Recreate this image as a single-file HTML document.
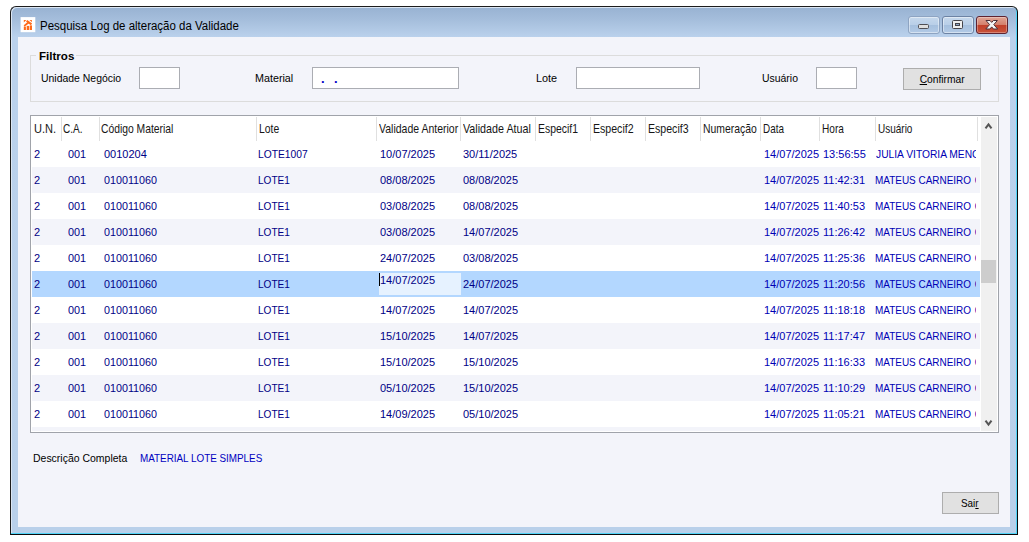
<!DOCTYPE html>
<html lang="pt-BR">
<head>
<meta charset="utf-8">
<title>Pesquisa Log de alteração da Validade</title>
<style>
*{box-sizing:border-box;margin:0;padding:0}
html,body{width:1029px;height:542px;background:#fff;overflow:hidden}
body{font-family:"Liberation Sans",sans-serif;font-size:11px;color:#000;position:relative}
.win{position:absolute;left:10px;top:6px;width:1008px;height:529px;border-radius:6px 6px 0 0;
 background:linear-gradient(#98b2d2 0px,#a4bddb 12px,#bad1ec 30px,#b9d0ea 100%);
 border:1px solid #1c1c1c;border-right-color:#0a0a0a;border-bottom-color:#0a0a0a;
 box-shadow:inset -1px -1px 0 #50d4f7, inset 1px 1px 0 #dbe6f3}
.client{position:absolute;left:18px;top:37px;width:992px;height:490px;background:#f3f4fa}
.ticon{position:absolute;left:20px;top:17px;width:16px;height:16px}
.title{position:absolute;left:40px;top:19px;font-size:12px;line-height:14px;white-space:nowrap;color:#000;transform-origin:0 50%;transform:scaleX(0.956);}
.cap{position:absolute;top:16px;height:18px;width:32px;border:1px solid #6d83a4;border-radius:3px;
 background:linear-gradient(#c6d8ec 0,#b9cfe8 48%,#a6c0de 52%,#b2cae6 100%);box-shadow:inset 0 0 0 1px rgba(255,255,255,.45)}
.cap.min{border-color:#8ea4c2}
.cap.close{background:linear-gradient(#e0a596 0,#d4806c 48%,#c1402a 52%,#c8523a 100%);border-color:#5e2230;box-shadow:inset 0 0 0 1px rgba(255,255,255,.3)}
.grp{position:absolute;left:30px;top:55px;width:969px;height:47px;border:1px solid #dcdcdc}
.grp-l{position:absolute;left:36px;top:50px;padding:0 3px;background:#f3f4fa;font-weight:bold;font-size:11px;line-height:13px}
.lbl{position:absolute;top:72px;line-height:13px;white-space:nowrap;transform-origin:0 50%}
.inp{position:absolute;top:67px;height:22px;background:#fff;border:1px solid #abadb3}
.bt{display:inline-block}
.dots{position:absolute;left:8px;top:4px;line-height:13px;font-size:13px;font-weight:bold;color:#0000c8}
.btn{position:absolute;background:#e1e1e1;border:1px solid #adadad;text-align:center;white-space:nowrap}
.grid{position:absolute;left:30px;top:115px;width:969px;height:318px;border:1px solid #a0a3aa;background:#fff}
.gin{position:absolute;left:1px;top:1px;width:948px;height:314px;overflow:hidden}
.h{position:absolute;top:5px;font-size:12.4px;line-height:14px;white-space:nowrap;color:#161616;transform-origin:0 50%}
.sep{position:absolute;top:0;width:1px;height:24px;background:#e0e0e0}
.row{position:absolute;left:0;width:948px;height:26px;background:#fff;color:#000086}
.row.alt{background:#f3f4fa}
.row.sel{background:#b3d7ff}
.c{position:absolute;top:7px;line-height:13px;white-space:nowrap;transform-origin:0 50%}
.uclip{position:absolute;left:843px;top:0;width:101px;height:26px;overflow:hidden}
.uclip .c{left:0}
.c b{font-weight:normal;margin-left:1px}
.c-ca{transform:scaleX(0.988);}
.c-cod{transform:scaleX(0.976);}
.c-cod1{}
.c-lote{transform:scaleX(0.915);}
.c-lote1{transform:scaleX(0.933);}
.c-usr{transform:scaleX(0.905);}
.c-usr1{transform:scaleX(0.94);}
.c-data,.c-hora,.c-usr,.c-usr1{color:#0000b4}
.uclip .c-usr1{left:1px;transform:scaleX(0.932)}
.edit{position:absolute;left:347px;top:2px;width:82px;height:22px;background:#e6f2ff}
.caret{position:absolute;left:0;top:0;width:1px;height:13px;background:#000}
.et{position:absolute;left:1px;top:1px;line-height:13px}
.sb{position:absolute;left:950px;top:1px;width:16px;height:314px;background:#f0f0f0}
.thumb{position:absolute;left:0;top:143px;width:15px;height:23px;background:#cdcdcd}
.sb svg{position:absolute;left:0}
.desc{position:absolute;top:452px;line-height:13px;white-space:nowrap;transform-origin:0 50%}
</style>
</head>
<body>
<div class="win"></div>
<svg class="ticon" viewBox="0 0 16 16" width="16" height="16"><rect x="0.6" y="0.1" width="14.7" height="15.1" fill="#fff"/><g fill="#ff6a1a" transform="translate(0.9,0)"><path d="M2.9 2.9h2.6L2.9 5.5z"/><path d="M6.4 2.9l4.8 3.7-1.3 1.7-4.8-3.7z"/><path d="M8.6 2.9H11v2.4z"/><path d="M7.2 4.6l1.4 1.4-5 3.8-.8-1.6z"/><rect x="2.9" y="9.6" width="2.1" height="3.4"/><rect x="5.8" y="8.9" width="2.5" height="4.1"/><rect x="8.9" y="8.4" width="2.2" height="4.6"/></g></svg>
<div class="title">Pesquisa Log de alteração da Validade</div>
<div class="cap min" style="left:908px"><svg viewBox="0 0 31 17" width="31" height="17" style="position:absolute;left:-1px;top:-1px;overflow:visible"><rect x="10.5" y="8.5" width="10" height="4" rx="1" fill="#dedede" stroke="#4f4f55"/></svg></div>
<div class="cap" style="left:942px"><svg viewBox="0 0 31 17" width="31" height="17" style="position:absolute;left:-1px;top:-1px;overflow:visible"><rect x="10.5" y="4.5" width="10" height="8" rx="1" fill="#efefef" stroke="#45454b"/><rect x="13.5" y="7.5" width="4" height="2" fill="#8fa8c8" stroke="#45454b"/></svg></div>
<div class="cap close" style="left:976px"><svg viewBox="0 0 31 17" width="31" height="17" style="position:absolute;left:-1px;top:-1px;overflow:visible"><path d="M10 4.5h4l1.7 1.9 1.7-1.9h4l-3.6 4.1 3.8 4.4h-4.1l-1.8-2.1-1.8 2.1h-4.1l3.8-4.4z" fill="#f6f6f6" stroke="#4a3038" stroke-width="1" stroke-linejoin="round"/></svg></div>
<div class="client"></div>
<div class="grp"></div>
<div class="grp-l"><span class="bt" style="transform-origin:0 50%;transform:scaleX(1.051);">Filtros</span></div>
<span class="lbl" style="left:41px;transform:scaleX(0.949);">Unidade Negócio</span>
<div class="inp" style="left:139px;width:41px"></div>
<span class="lbl" style="left:255px;transform:scaleX(0.977);">Material</span>
<div class="inp" style="left:312px;width:147px"><span class="dots">.</span><span class="dots" style="left:21px">.</span></div>
<span class="lbl" style="left:536px;transform:scaleX(0.986);">Lote</span>
<div class="inp" style="left:576px;width:124px"></div>
<span class="lbl" style="left:762px;transform:scaleX(0.949);">Usuário</span>
<div class="inp" style="left:816px;width:41px"></div>
<div class="btn" style="left:903px;top:68px;width:78px;height:22px;line-height:20px"><span class="bt" style="transform:scaleX(0.932);"><u>C</u>onfirmar</span></div>
<div class="grid">
<div class="gin">
<span class="h" style="left:2px;transform:scaleX(0.893);">U.N.</span>
<span class="h" style="left:31px;transform:scaleX(0.811);">C.A.</span>
<span class="h" style="left:69px;transform:scaleX(0.834);">Código Material</span>
<span class="h" style="left:227px;transform:scaleX(0.837);">Lote</span>
<span class="h" style="left:347px;transform:scaleX(0.847);">Validade Anterior</span>
<span class="h" style="left:431px;transform:scaleX(0.867);">Validade Atual</span>
<span class="h" style="left:506px;transform:scaleX(0.841);">Especif1</span>
<span class="h" style="left:561px;transform:scaleX(0.854);">Especif2</span>
<span class="h" style="left:616px;transform:scaleX(0.854);">Especif3</span>
<span class="h" style="left:671px;transform:scaleX(0.839);">Numeração</span>
<span class="h" style="left:731px;transform:scaleX(0.798);">Data</span>
<span class="h" style="left:790px;transform:scaleX(0.814);">Hora</span>
<span class="h" style="left:846px;transform:scaleX(0.806);">Usuário</span>
<i class="sep" style="left:29px"></i>
<i class="sep" style="left:67px"></i>
<i class="sep" style="left:224px"></i>
<i class="sep" style="left:344px"></i>
<i class="sep" style="left:428px"></i>
<i class="sep" style="left:503px"></i>
<i class="sep" style="left:558px"></i>
<i class="sep" style="left:613px"></i>
<i class="sep" style="left:668px"></i>
<i class="sep" style="left:728px"></i>
<i class="sep" style="left:787px"></i>
<i class="sep" style="left:843px"></i>
<i class="sep" style="left:945px"></i>
<div class="row" style="top:24px">
<span class="c c-un" style="left:2px">2</span>
<span class="c c-ca" style="left:36px">001</span>
<span class="c c-cod1" style="left:72px">0010204</span>
<span class="c c-lote1" style="left:226px">LOTE1007</span>
<span class="c c-va" style="left:348px">10/07/2025</span>
<span class="c c-vat" style="left:431px">30/11/2025</span>
<span class="c c-data" style="left:732px">14/07/2025</span>
<span class="c c-hora" style="left:791px">13:56:55</span>
<span class="uclip"><span class="c c-usr1">JULIA VITORIA MENC</span></span>
</div>
<div class="row alt" style="top:50px">
<span class="c c-un" style="left:2px">2</span>
<span class="c c-ca" style="left:36px">001</span>
<span class="c c-cod" style="left:72px">010011060</span>
<span class="c c-lote" style="left:226px">LOTE1</span>
<span class="c c-va" style="left:348px">08/08/2025</span>
<span class="c c-vat" style="left:431px">08/08/2025</span>
<span class="c c-data" style="left:732px">14/07/2025</span>
<span class="c c-hora" style="left:791px">11:42:31</span>
<span class="uclip"><span class="c c-usr">MATEUS CARNEIRO <b>C</b></span></span>
</div>
<div class="row" style="top:76px">
<span class="c c-un" style="left:2px">2</span>
<span class="c c-ca" style="left:36px">001</span>
<span class="c c-cod" style="left:72px">010011060</span>
<span class="c c-lote" style="left:226px">LOTE1</span>
<span class="c c-va" style="left:348px">03/08/2025</span>
<span class="c c-vat" style="left:431px">08/08/2025</span>
<span class="c c-data" style="left:732px">14/07/2025</span>
<span class="c c-hora" style="left:791px">11:40:53</span>
<span class="uclip"><span class="c c-usr">MATEUS CARNEIRO <b>C</b></span></span>
</div>
<div class="row alt" style="top:102px">
<span class="c c-un" style="left:2px">2</span>
<span class="c c-ca" style="left:36px">001</span>
<span class="c c-cod" style="left:72px">010011060</span>
<span class="c c-lote" style="left:226px">LOTE1</span>
<span class="c c-va" style="left:348px">03/08/2025</span>
<span class="c c-vat" style="left:431px">14/07/2025</span>
<span class="c c-data" style="left:732px">14/07/2025</span>
<span class="c c-hora" style="left:791px">11:26:42</span>
<span class="uclip"><span class="c c-usr">MATEUS CARNEIRO <b>C</b></span></span>
</div>
<div class="row" style="top:128px">
<span class="c c-un" style="left:2px">2</span>
<span class="c c-ca" style="left:36px">001</span>
<span class="c c-cod" style="left:72px">010011060</span>
<span class="c c-lote" style="left:226px">LOTE1</span>
<span class="c c-va" style="left:348px">24/07/2025</span>
<span class="c c-vat" style="left:431px">03/08/2025</span>
<span class="c c-data" style="left:732px">14/07/2025</span>
<span class="c c-hora" style="left:791px">11:25:36</span>
<span class="uclip"><span class="c c-usr">MATEUS CARNEIRO <b>C</b></span></span>
</div>
<div class="row alt sel" style="top:154px">
<span class="c c-un" style="left:2px">2</span>
<span class="c c-ca" style="left:36px">001</span>
<span class="c c-cod" style="left:72px">010011060</span>
<span class="c c-lote" style="left:226px">LOTE1</span>
<div class="edit"><span class="caret"></span><span class="et">14/07/2025</span></div>
<span class="c c-vat" style="left:431px">24/07/2025</span>
<span class="c c-data" style="left:732px">14/07/2025</span>
<span class="c c-hora" style="left:791px">11:20:56</span>
<span class="uclip"><span class="c c-usr">MATEUS CARNEIRO <b>C</b></span></span>
</div>
<div class="row" style="top:180px">
<span class="c c-un" style="left:2px">2</span>
<span class="c c-ca" style="left:36px">001</span>
<span class="c c-cod" style="left:72px">010011060</span>
<span class="c c-lote" style="left:226px">LOTE1</span>
<span class="c c-va" style="left:348px">14/07/2025</span>
<span class="c c-vat" style="left:431px">14/07/2025</span>
<span class="c c-data" style="left:732px">14/07/2025</span>
<span class="c c-hora" style="left:791px">11:18:18</span>
<span class="uclip"><span class="c c-usr">MATEUS CARNEIRO <b>C</b></span></span>
</div>
<div class="row alt" style="top:206px">
<span class="c c-un" style="left:2px">2</span>
<span class="c c-ca" style="left:36px">001</span>
<span class="c c-cod" style="left:72px">010011060</span>
<span class="c c-lote" style="left:226px">LOTE1</span>
<span class="c c-va" style="left:348px">15/10/2025</span>
<span class="c c-vat" style="left:431px">14/07/2025</span>
<span class="c c-data" style="left:732px">14/07/2025</span>
<span class="c c-hora" style="left:791px">11:17:47</span>
<span class="uclip"><span class="c c-usr">MATEUS CARNEIRO <b>C</b></span></span>
</div>
<div class="row" style="top:232px">
<span class="c c-un" style="left:2px">2</span>
<span class="c c-ca" style="left:36px">001</span>
<span class="c c-cod" style="left:72px">010011060</span>
<span class="c c-lote" style="left:226px">LOTE1</span>
<span class="c c-va" style="left:348px">15/10/2025</span>
<span class="c c-vat" style="left:431px">15/10/2025</span>
<span class="c c-data" style="left:732px">14/07/2025</span>
<span class="c c-hora" style="left:791px">11:16:33</span>
<span class="uclip"><span class="c c-usr">MATEUS CARNEIRO <b>C</b></span></span>
</div>
<div class="row alt" style="top:258px">
<span class="c c-un" style="left:2px">2</span>
<span class="c c-ca" style="left:36px">001</span>
<span class="c c-cod" style="left:72px">010011060</span>
<span class="c c-lote" style="left:226px">LOTE1</span>
<span class="c c-va" style="left:348px">05/10/2025</span>
<span class="c c-vat" style="left:431px">15/10/2025</span>
<span class="c c-data" style="left:732px">14/07/2025</span>
<span class="c c-hora" style="left:791px">11:10:29</span>
<span class="uclip"><span class="c c-usr">MATEUS CARNEIRO <b>C</b></span></span>
</div>
<div class="row" style="top:284px">
<span class="c c-un" style="left:2px">2</span>
<span class="c c-ca" style="left:36px">001</span>
<span class="c c-cod" style="left:72px">010011060</span>
<span class="c c-lote" style="left:226px">LOTE1</span>
<span class="c c-va" style="left:348px">14/09/2025</span>
<span class="c c-vat" style="left:431px">05/10/2025</span>
<span class="c c-data" style="left:732px">14/07/2025</span>
<span class="c c-hora" style="left:791px">11:05:21</span>
<span class="uclip"><span class="c c-usr">MATEUS CARNEIRO <b>C</b></span></span>
</div>
<div class="row alt" style="top:310px;height:4px"></div>
</div>
<div class="sb"><svg style="top:5px" width="16" height="8" viewBox="0 0 16 8"><path d="M4.5 6.3L7.5 2.3l3 4" fill="none" stroke="#555" stroke-width="2"/></svg><div class="thumb"></div><svg style="top:302px" width="16" height="8" viewBox="0 0 16 8"><path d="M4.5 1.7L7.5 5.7l3-4" fill="none" stroke="#555" stroke-width="2"/></svg></div>
</div>
<span class="desc" style="left:33px;transform:scaleX(0.952);">Descrição Completa</span>
<span class="desc" style="left:140px;color:#0000c0;transform:scaleX(0.897);">MATERIAL LOTE SIMPLES</span>
<div class="btn" style="left:942px;top:492px;width:57px;height:22px;line-height:20px"><span class="bt" style="transform-origin:0 50%;transform:scaleX(0.9);">Sai<u>r</u></span></div>
</body>
</html>
